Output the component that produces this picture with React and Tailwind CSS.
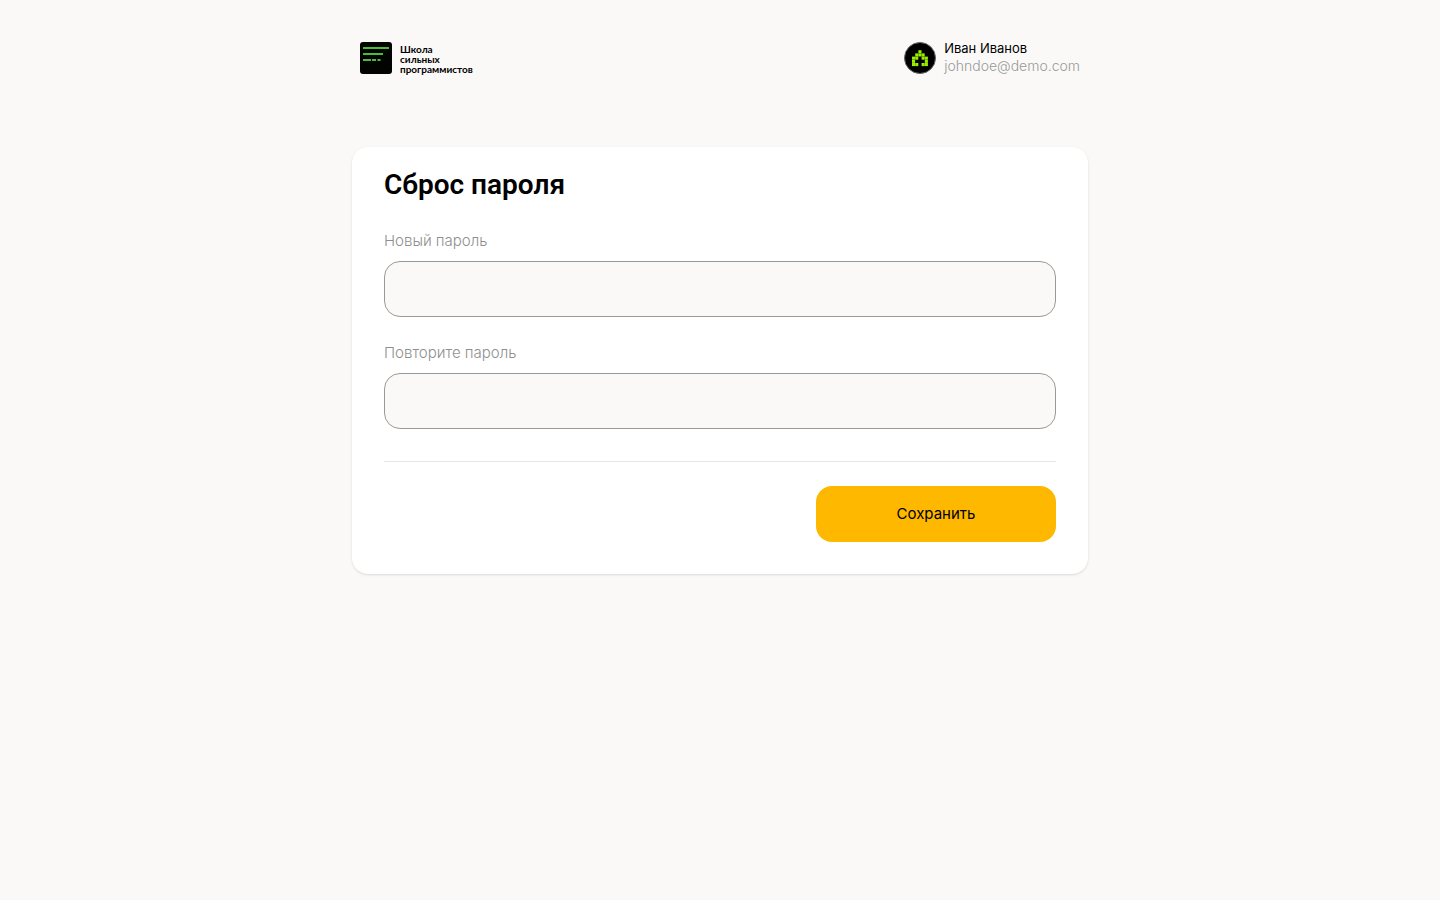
function Logo() {
  return (
    <svg className="size-8" viewBox="0 0 32 32" aria-hidden="true">
      <rect width="32" height="32" rx="3" fill="#020402" />
      <g fill="#4dba38">
        <rect x="3" y="5" width="26" height="2" />
        <rect x="3" y="11" width="20" height="2" />
        <rect x="3" y="17" width="8" height="2" />
        <rect x="12" y="17" width="4" height="2" />
        <rect x="17.5" y="17" width="3" height="2" />
      </g>
    </svg>
  );
}

const avatarRows = ["..#..", ".###.", "##.##", "#...#", "##.##"];

function Avatar() {
  return (
    <svg className="size-8" viewBox="0 0 32 32" aria-hidden="true">
      <circle cx="16" cy="16" r="15.5" fill="#000" stroke="#666" />
      {avatarRows.map((row, y) =>
        [...row].map((cell, x) =>
          cell === "#" ? (
            <rect key={x + "-" + y} x={8 + x * 3.2} y={8.2 + y * 3.2} width="3.1" height="3.1" fill="#99ee00" />
          ) : null
        )
      )}
    </svg>
  );
}

function PasswordField({ id, label }) {
  return (
    <div>
      <label htmlFor={id} className="mb-2 block text-[15px] leading-6 font-light text-[#8f8f8f]">
        {label}
      </label>
      <input
        id={id}
        type="password"
        className="block h-14 w-full rounded-2xl border border-[#999] bg-[#faf9f7] px-4 outline-none"
      />
    </div>
  );
}

export default function App() {
  return (
    <div className="min-h-screen bg-[#faf9f7] px-4 font-['Inter',sans-serif] text-black">
      <div className="mx-auto max-w-[736px]">
        <header className="flex items-center justify-between px-2 pt-[39px]">
          <a href="#" className="flex items-center gap-2">
            <Logo />
            <span className="pt-0.5 font-['Lato',sans-serif] text-[10px] leading-[10px] font-bold">
              Школа
              <br />
              сильных
              <br />
              программистов
            </span>
          </a>
          <a href="#" className="flex items-center gap-2">
            <Avatar />
            <span className="pb-0.5 leading-[18px]">
              <span className="block text-[13px]">Иван Иванов</span>
              <span className="block text-sm leading-[18px] font-light text-[#999]">johndoe@demo.com</span>
            </span>
          </a>
        </header>
        <main className="mt-[70px] rounded-2xl bg-white px-8 pt-5 pb-8 shadow-sm">
          <h1 className="font-['Roboto',sans-serif] text-[28px] leading-9 font-semibold">Сброс пароля</h1>
          <form onSubmit={(event) => event.preventDefault()}>
            <div className="mt-[26px] flex flex-col gap-6">
              <PasswordField id="new-password" label="Новый пароль" />
              <PasswordField id="repeat-password" label="Повторите пароль" />
            </div>
            <div className="mt-8 flex justify-end border-t border-[#e6e6e6] pt-6">
              <button type="submit" className="h-14 w-60 rounded-2xl bg-[#ffb800] text-[15px]">
                Сохранить
              </button>
            </div>
          </form>
        </main>
      </div>
    </div>
  );
}
